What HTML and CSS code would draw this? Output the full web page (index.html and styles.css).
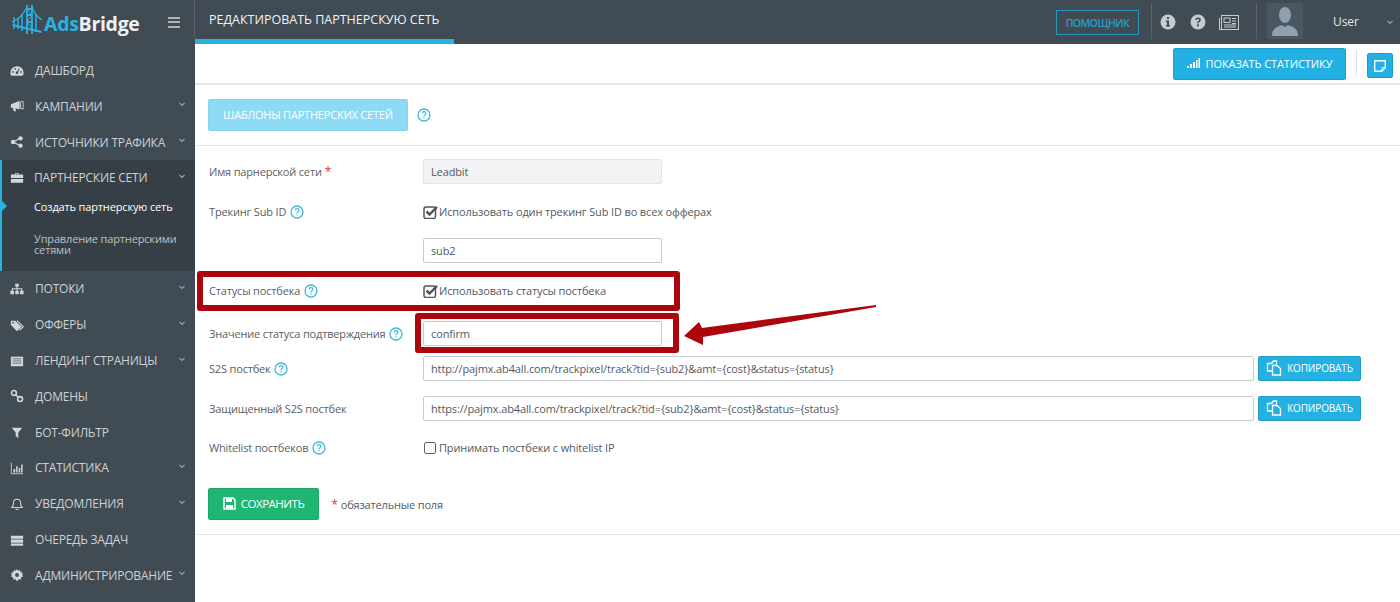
FILE: index.html
```html
<!DOCTYPE html>
<html lang="ru">
<head>
<meta charset="utf-8">
<title>AdsBridge</title>
<link rel="stylesheet" href="styles.css">
</head>
<body>
<svg class="defs" width="0" height="0" aria-hidden="true">
  <symbol id="i-chev" viewBox="0 0 8 5"><path d="M1.500 1l2.500 2.500L6.500 1" fill="none" stroke="currentColor" stroke-width="1.200"/></symbol>
  <symbol id="i-help" viewBox="0 0 14 14"><circle cx="7" cy="7" r="6" fill="none" stroke="currentColor" stroke-width="1.300"/><path d="M5.100 5.400C5.200 4.200 6 3.700 7 3.700c1.100 0 1.900.6 1.900 1.600 0 1.500-1.900 1.400-1.900 2.900" fill="none" stroke="currentColor" stroke-width="1.200"/><rect x="6.400" y="9.200" width="1.200" height="1.200" fill="currentColor"/></symbol>
  <symbol id="i-copy" viewBox="0 0 16 16"><path d="M6 4V2.500L7.500 1H10.500V5M6 11H1.500V3.500H6M6.500 5.500H11L14.500 8.500V15H6.500z" fill="none" stroke="currentColor" stroke-width="1.300"/></symbol>
  <symbol id="i-check" viewBox="0 0 15 14"><rect x="1" y="2" width="11.500" height="11.500" rx="2" fill="none" stroke="currentColor" stroke-width="1.500"/><path d="M3.500 6.500l3 3L14 1.800" fill="none" stroke="currentColor" stroke-width="2.500"/></symbol>
</svg>

<header class="topbar">
  <div class="brand">
    <svg class="logo" width="33" height="34" viewBox="0 0 33 34"><g fill="none" stroke="#29b2e1"><path d="M16 1v29M21 1v29M16 5h5M16 11h5M16 18h5" stroke-width="1.800"/><path d="M16 3C12 11 7 16 1 18M21 3c2 6 5 10 10 13" stroke-width="1.300"/><path d="M1.500 21l29 7" stroke-width="2"/><path d="M3 13v12M7 14v11M11 10v17M25 10v18" stroke-width="1.500"/><path d="M16 5l5 6-5 7 5 6" stroke-width="1"/></g></svg>
    <span class="brand-name"><span class="brand-ads">Ads</span>Bridge</span>
    <span class="burger"><i></i><i></i><i></i></span>
  </div>
  <div class="page-title">РЕДАКТИРОВАТЬ ПАРТНЕРСКУЮ СЕТЬ</div>
  <div class="top-right">
    <span class="helper">ПОМОЩНИК</span>
    <span class="sep"></span>
    <svg class="top-ico" width="16" height="16" viewBox="0 0 16 16"><circle cx="8" cy="8" r="7.500" fill="currentColor"/><path d="M6 6.500h3v4.500h1v1.500H6V11h1V8H6zM7 3h2v2H7z" fill="#414b54"/></svg>
    <svg class="top-ico" width="16" height="16" viewBox="0 0 16 16"><circle cx="8" cy="8" r="7.500" fill="currentColor"/><path d="M5.300 6C5.400 4.300 6.600 3.500 8 3.500c1.600 0 2.800.9 2.800 2.300 0 2-2.100 1.900-2.100 3.400H7c0-2.300 2-2.200 2-3.300 0-.6-.4-1-1-1-.7 0-1 .4-1.100 1.100zM7 10.200h1.800V12.200H7z" fill="#414b54"/></svg>
    <svg class="top-ico news" width="20" height="15" viewBox="0 0 20 15"><g fill="none" stroke="currentColor"><rect x="2.500" y=".5" width="17" height="14"/><path d="M.5 3v11.500h2"/><rect x="5" y="3" width="6" height="4.500"/><path d="M13 3.500h4M13 6h4M13 8.500h4M5 10h12M5 12h12"/></g></svg>
    <span class="sep sep-b"></span>
    <span class="avatar"><svg width="36" height="36" viewBox="0 0 36 36"><rect width="36" height="36" fill="#4c565f"/><ellipse cx="18" cy="12" rx="6" ry="8" fill="#8fa0ae"/><path d="M5 33c0-7 4-9 10-11l3 2 3-2c6 2 10 4 10 11z" fill="#8fa0ae"/></svg></span>
    <span class="user">User</span>
    <svg class="chev user-chev"><use href="#i-chev"/></svg>
  </div>
</header>

<div class="shell">
  <nav class="sidebar">
    <a class="nav-item"><svg class="nav-ico" viewBox="0 0 16 16"><path d="M8 2.500a7.500 7.500 0 0 0-7.500 7.500c0 1.300.3 2.500 1 3.500h13c.7-1 1-2.200 1-3.500A7.500 7.500 0 0 0 8 2.500z" fill="currentColor"/><circle cx="8" cy="10" r="1.500" fill="#414b54"/><path d="M8 10l2.500-4.500" stroke="#414b54" stroke-width="1.200"/><circle cx="3.500" cy="9" r="1" fill="#414b54"/><circle cx="6" cy="5.500" r="1" fill="#414b54"/><circle cx="12.500" cy="9" r="1" fill="#414b54"/></svg>ДАШБОРД</a>
    <a class="nav-item has-sub"><svg class="nav-ico" viewBox="0 0 16 16"><path d="M1 6l10-4v10L6 10.500l1 3.500H4.500L3 10H1z" fill="currentColor"/><path d="M12 3.500l3-1v9l-3-1z" fill="none" stroke="currentColor"/></svg>КАМПАНИИ<svg class="chev"><use href="#i-chev"/></svg></a>
    <a class="nav-item has-sub"><svg class="nav-ico" viewBox="0 0 16 16"><g fill="currentColor"><circle cx="3.500" cy="8" r="2.500"/><circle cx="12" cy="3.800" r="2.500"/><circle cx="12" cy="12.200" r="2.500"/></g><path d="M3.500 8L12 3.800M3.500 8L12 12.200" stroke="currentColor" stroke-width="1.400"/></svg>ИСТОЧНИКИ ТРАФИКА<svg class="chev"><use href="#i-chev"/></svg></a>
    <div class="nav-group">
      <a class="nav-item has-sub"><svg class="nav-ico" viewBox="0 0 16 16"><path d="M5.500 4V2.500h5V4H15v4H1V4zM6.500 3.500V4h3v-.5zM1 9h14v4.500H1z" fill="currentColor" fill-rule="evenodd"/></svg>ПАРТНЕРСКИЕ СЕТИ<svg class="chev"><use href="#i-chev"/></svg></a>
      <a class="sub-item current">Создать партнерскую сеть</a>
      <a class="sub-item">Управление партнерскими сетями</a>
    </div>
    <a class="nav-item has-sub"><svg class="nav-ico" viewBox="0 0 16 16"><path d="M6 2h4v3.500H8.600V7H14v3h1.500v4h-4v-4h1.200V8.200H8.600V10H10v4H6v-4h1.400V8.200H3.300V10h1.200v4h-4v-4H2V7h5.400V5.500H6z" fill="currentColor"/></svg>ПОТОКИ<svg class="chev"><use href="#i-chev"/></svg></a>
    <a class="nav-item has-sub"><svg class="nav-ico" viewBox="0 0 16 16"><path d="M1 3h5l7 7-5 5-7-7z" fill="currentColor"/><path d="M8 3l7 7-4 4" fill="none" stroke="currentColor" stroke-width="1.300"/><circle cx="3.500" cy="5.500" r="1" fill="#414b54"/></svg>ОФФЕРЫ<svg class="chev"><use href="#i-chev"/></svg></a>
    <a class="nav-item has-sub"><svg class="nav-ico" viewBox="0 0 16 16"><path d="M1 3h14v11H1z" fill="currentColor"/><path d="M3 5.500h10M3 8h10M3 10.500h10" stroke="#414b54" stroke-width=".8"/></svg>ЛЕНДИНГ СТРАНИЦЫ<svg class="chev"><use href="#i-chev"/></svg></a>
    <a class="nav-item"><svg class="nav-ico" viewBox="0 0 16 16"><g fill="none" stroke="currentColor" stroke-width="1.800"><circle cx="4.500" cy="4.500" r="2.800"/><circle cx="11.500" cy="11.500" r="2.800"/><path d="M6.500 6.500l3 3"/></g></svg>ДОМЕНЫ</a>
    <a class="nav-item"><svg class="nav-ico" viewBox="0 0 16 16"><path d="M2 3h12L9.500 8.500V15l-3-2.500v-4z" fill="currentColor"/></svg>БОТ-ФИЛЬТР</a>
    <a class="nav-item has-sub"><svg class="nav-ico" viewBox="0 0 16 16"><path d="M1.500 2v12.500H15" fill="none" stroke="currentColor"/><path d="M4 9h2v4H4zM7 6h1.700v7H7zM10 8h1.700v5H10zM12.700 4h1.700v9h-1.700z" fill="currentColor"/></svg>СТАТИСТИКА<svg class="chev"><use href="#i-chev"/></svg></a>
    <a class="nav-item has-sub"><svg class="nav-ico" viewBox="0 0 16 16"><path d="M8 2.500c2.500 0 4 1.800 4 4.300 0 3 .8 4 2 5.200H2c1.200-1.200 2-2.200 2-5.200 0-2.500 1.500-4.300 4-4.300zM6.500 13.500c.3 1 2.700 1 3 0" fill="none" stroke="currentColor" stroke-width="1.200"/></svg>УВЕДОМЛЕНИЯ<svg class="chev"><use href="#i-chev"/></svg></a>
    <a class="nav-item"><svg class="nav-ico" viewBox="0 0 16 16"><path d="M1 3h14v3.500H1zM1 7.500h14V11H1zM1 12h14v2.500H1z" fill="currentColor"/></svg>ОЧЕРЕДЬ ЗАДАЧ</a>
    <a class="nav-item has-sub"><svg class="nav-ico" viewBox="0 0 16 16"><path d="M8 1l1.300 2 2.300-.6.500 2.400 2.400.5L14 8l1 1.700-2.400 1 .1 2.400-2.400-.2L8 15l-1.800-2.100-2.400.2-.2-2.400L1 9.700 2 8 1.500 5.300l2.400-.5.500-2.400 2.300.6z" fill="currentColor"/><circle cx="8" cy="8" r="2.200" fill="#414b54"/></svg>АДМИНИСТРИРОВАНИЕ<svg class="chev"><use href="#i-chev"/></svg></a>
  </nav>

  <main class="content">
    <div class="toolbar">
      <button class="btn btn-blue btn-stats"><svg width="13" height="10" viewBox="0 0 13 10"><path d="M0 8h2v2H0zM3 6h2v4H3zM6 4h2v6H6zM9 2h1.500v8H9zM11.500 0H13v10h-1.500z" fill="currentColor"/></svg>ПОКАЗАТЬ СТАТИСТИКУ</button>
      <span class="tool-sep"></span>
      <button class="btn btn-blue btn-note"><svg width="14" height="14" viewBox="0 0 16 16"><path d="M2 2h12v8l-4 4H2z" fill="none" stroke="currentColor" stroke-width="1.500"/><path d="M14 10h-4v4" fill="none" stroke="currentColor"/></svg></button>
    </div>
    <div class="template-bar">
      <button class="btn btn-faded">ШАБЛОНЫ ПАРТНЕРСКИХ СЕТЕЙ</button>
      <svg class="help"><use href="#i-help"/></svg>
    </div>
    <form class="form">
      <div class="row row-name">
        <label class="lbl">Имя парнерской сети <span class="req">*</span></label>
        <input class="field field-short readonly" value="Leadbit" readonly>
      </div>
      <div class="row row-track">
        <label class="lbl">Трекинг Sub ID <svg class="help"><use href="#i-help"/></svg></label>
        <span class="check"><svg class="cb"><use href="#i-check"/></svg>Использовать один трекинг Sub ID во всех офферах</span>
      </div>
      <div class="row row-sub">
        <label class="lbl"></label>
        <input class="field field-short" value="sub2">
      </div>
      <div class="row row-status">
        <label class="lbl">Статусы постбека <svg class="help"><use href="#i-help"/></svg></label>
        <span class="check"><svg class="cb"><use href="#i-check"/></svg>Использовать статусы постбека</span>
      </div>
      <div class="row row-confirm">
        <label class="lbl">Значение статуса подтверждения <svg class="help"><use href="#i-help"/></svg></label>
        <input class="field field-short" value="confirm">
      </div>
      <div class="row row-s2s">
        <label class="lbl">S2S постбек <svg class="help"><use href="#i-help"/></svg></label>
        <input class="field field-long" value="http://pajmx.ab4all.com/trackpixel/track?tid={sub2}&amt={cost}&status={status}">
        <button type="button" class="btn btn-blue btn-copy"><svg width="16" height="16"><use href="#i-copy"/></svg>КОПИРОВАТЬ</button>
      </div>
      <div class="row row-s2s">
        <label class="lbl">Защищенный S2S постбек</label>
        <input class="field field-long" value="https://pajmx.ab4all.com/trackpixel/track?tid={sub2}&amt={cost}&status={status}">
        <button type="button" class="btn btn-blue btn-copy"><svg width="16" height="16"><use href="#i-copy"/></svg>КОПИРОВАТЬ</button>
      </div>
      <div class="row row-white">
        <label class="lbl">Whitelist постбеков <svg class="help"><use href="#i-help"/></svg></label>
        <span class="check"><span class="cb-empty"></span>Принимать постбеки с whitelist IP</span>
      </div>
      <div class="save-row">
        <button type="button" class="btn btn-save"><svg width="13" height="13" viewBox="0 0 13 13"><path d="M1 1h9l2 2v9H1z" fill="none" stroke="currentColor" stroke-width="1.500"/><path d="M3 1.500h6v3.500H3zM3 8h7v3.500H3z" fill="currentColor"/></svg>СОХРАНИТЬ</button>
        <span class="note"><span class="req">*</span> обязательные поля</span>
      </div>
    </form>
    <div class="mark mark-status"></div>
    <div class="mark mark-confirm"></div>
    <svg class="arrow" width="200" height="50" viewBox="0 0 200 50"><path d="M194 1L20 24 17 18 2 32 21 41 21 33 194 3z" fill="#aa060c"/></svg>
  </main>
</div>
</body>
</html>
```
FILE: styles.css
```css
* { box-sizing: border-box; }
html, body { margin: 0; height: 602px; overflow: hidden; }
body { font-family: "Open Sans", "Noto Sans", sans-serif; font-size: 11px; color: #55595e; background: #fff; }
.defs { position: absolute; }

.topbar { height: 44px; background: #414b54; display: flex; color: #fff; }
.brand { width: 195px; display: flex; align-items: center; position: relative; border-right: 1px solid #5a636b; height: 38px; }
.logo { margin: 3px 0 0 11px; flex: none; }
.brand-name { font-weight: 700; font-size: 19.500px; letter-spacing: -.3px; color: #eef1f3; margin: 8px 0 0 0; }
.brand-ads { color: #29b2e1; }
.burger { display: flex; flex-direction: column; gap: 2.500px; width: 12px; margin: 0 0 0 auto; position: relative; right: 14px; top: 3px; }
.burger i { display: block; height: 2px; background: #aeb4b9; }
.page-title { width: 259px; height: 44px; border-bottom: 5px solid #29b2e1; padding: 11px 0 0 14px; font-size: 12.500px; line-height: 18px; color: #f1f3f4; white-space: nowrap; }
.top-right { margin-left: auto; display: flex; align-items: center; height: 38px; color: #c6cbcf; padding-right: 6px; }
.helper { width: 83px; height: 25px; border: 1px solid #2596bd; color: #2b9cc4; font-size: 10.500px; letter-spacing: -.6px; line-height: 24px; text-align: center; margin: 6px 0 0; font-weight: 600; }
.sep { width: 1px; height: 36px; background: #59626a; margin: 4px 0 0 12px; }
.sep-b { margin-left: 17px; }
.top-ico { margin: 6px 0 0 8px; flex: none; }
.top-ico + .top-ico { margin-left: 14px; }
.news { margin-left: 13px !important; }
.avatar { display: block; width: 36px; height: 36px; margin: 4px 0 0 10px; }
.avatar svg { display: block; }
.user { font-size: 12px; margin: 4px 0 0 30px; color: #e4e7e9; }
.chev { width: 8px; height: 5px; color: #98a0a6; flex: none; }
.user-chev { margin: 6px 0 0 27px; }

.shell { display: flex; height: 558px; }
.sidebar { width: 195px; background: #414b54; flex: none; padding-top: 8.700px; color: #cdd1d4; }
.nav-item { display: flex; align-items: center; height: 35.800px; padding: 0 0 0 35px; font-size: 12px; letter-spacing: -.2px; position: relative; white-space: nowrap; }
.nav-ico { position: absolute; left: 10px; top: 50%; margin-top: -7px; width: 14px; height: 14px; color: #d3d6d9; }
.nav-item .chev { position: absolute; right: 9px; top: 14px; }
.nav-group { background: #373f46; border-left: 2px solid #29b2e1; height: 111px; position: relative; }
.nav-group .nav-item { padding-left: 32px; height: 35px; }
.nav-group .nav-ico { left: 8px; }
.sub-item { display: block; font-size: 11px; letter-spacing: -.15px; padding-left: 32px; line-height: 11px; color: #bcc1c5; padding-right: 8px; margin-bottom: 11px; position: relative; }
.current { color: #fff; padding-top: 6px; margin-bottom: 21px; }
.current::before { content: ""; position: absolute; left: 0; top: 6px; border: 5px solid transparent; border-left-color: #29b2e1; }

.content { flex: 1; position: relative; min-width: 0; }
.toolbar { height: 41px; border-bottom: 2px solid #e4e6e7; display: flex; justify-content: flex-end; align-items: flex-start; padding: 4px 7px 0 0; }
.btn { font-family: inherit; border: 0; border-radius: 2px; color: #fff; display: inline-flex; align-items: center; justify-content: center; cursor: pointer; padding: 0 0 2px; }
.btn-blue { background: #23b1e4; border: 1px solid #1f9dca; }
.btn-stats { width: 173px; height: 32px; font-size: 11px; letter-spacing: -.1px; gap: 6px; }
.tool-sep { width: 1px; height: 27px; background: #dfe1e2; margin: 2px 10px 0; }
.btn-note { width: 26px; height: 25px; margin-top: 5px; padding: 0; }
.template-bar { height: 61px; border-bottom: 1px solid #e6e8e9; display: flex; align-items: center; padding: 0 0 0 13px; gap: 8px; }
.template-bar .help { margin-left: 1px; }
.btn-faded { width: 200px; height: 32px; background: #8ddaf5; font-size: 11px; letter-spacing: -.2px; border: 1px solid #84d3ef; }
.help { width: 14px; height: 14px; color: #45b6dc; flex: none; vertical-align: -3px; margin-left: 1px; }

.form { padding: 13px 0 0 14px; height: 389px; border-bottom: 1px solid #e6e8e9; }
.row { display: flex; align-items: center; }
.lbl { width: 214px; flex: none; font-size: 11px; color: #5a5e63; white-space: nowrap; letter-spacing: -.17px; }
.req { color: #d9413f; font-size: 13px; line-height: 10px; }
.field { font-family: inherit; font-size: 11px; color: #55595e; border: 1px solid #c8cbce; border-radius: 2px; padding: 0 7px; height: 25px; background: #fff; letter-spacing: -.125px; outline: 0; }
.field-short { width: 239px; }
.field-long { width: 831px; }
.readonly { background: #f1f3f4; border-color: #e2e4e6; }
.check { display: flex; align-items: center; font-size: 11px; color: #55595e; white-space: nowrap; letter-spacing: -.14px; }
.cb { width: 15px; height: 14px; margin-right: 1px; color: #4f565c; }
.cb-empty { width: 12px; height: 12px; border: 1.500px solid #5f656a; border-radius: 2px; margin: 0 3px 0 1px; }
.row-name { height: 25px; }
.row-track { height: 25px; margin-top: 15px; }
.row-sub { height: 25px; margin-top: 14px; }
.row-status { height: 25px; margin-top: 15px; }
.row-confirm { height: 26px; margin-top: 17px; }
.row-s2s { height: 26px; margin-top: 9px; }
.row-s2s + .row-s2s { margin-top: 14px; }
.row-white { height: 25px; margin-top: 14px; }
.btn-copy { width: 103px; height: 25px; margin-left: 4px; font-size: 10px; gap: 5px; letter-spacing: -.15px; padding: 0; }
.save-row { display: flex; align-items: center; margin-top: 28px; margin-left: -1px; }
.btn-save { width: 111px; height: 32px; background: #1fb673; border: 1px solid #1ca567; font-size: 11.500px; gap: 5px; letter-spacing: -.5px; }
.note { margin-left: 12px; font-size: 11px; letter-spacing: -.17px; }

.mark { position: absolute; border: 6px solid #aa060c; border-radius: 3px; }
.mark-status { left: 2px; top: 227px; width: 483px; height: 40px; }
.mark-confirm { left: 220px; top: 269px; width: 264px; height: 40px; }
.arrow { position: absolute; left: 487px; top: 260px; }
```
